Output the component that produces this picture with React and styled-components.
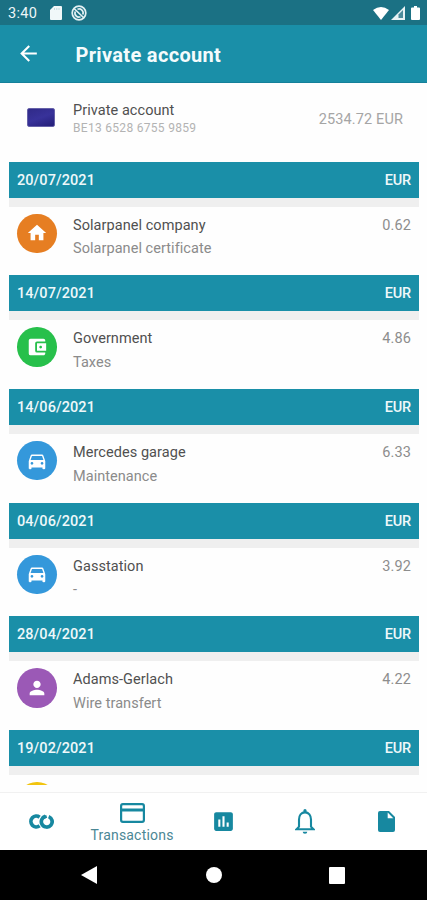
import React from "react";
import styled, { createGlobalStyle } from "styled-components";
import {
  MdHome,
  MdAccountBalanceWallet,
  MdDirectionsCar,
  MdPerson,
  MdInsertChart,
  MdArrowBack,
} from "react-icons/md";

const TEAL = "#1a8fa8";
const ICON_TEAL = "#1788a0";

const GlobalStyle = createGlobalStyle`
  * { box-sizing: border-box; }
  body { margin: 0; background: #fff; font-family: Roboto, "Liberation Sans", sans-serif; }
  svg { display: block; flex: none; }
`;

const Screen = styled.div`
  width: 427px;
  height: 900px;
  display: flex;
  flex-direction: column;
  overflow: hidden;
  background: #fefefe;
`;

const StatusBar = styled.div`
  flex: none;
  height: 25px;
  background: #1b7184;
  color: #eef6f8;
  display: flex;
  align-items: center;
  padding: 1px 7px 0 8px;
`;

const Clock = styled.span`
  width: 42px;
  font-size: 14.5px;
  letter-spacing: 0.3px;
`;

const StatusIcons = styled.div`
  display: flex;
  align-items: center;
  gap: ${(p) => p.$gap};
  margin-left: ${(p) => (p.$end ? "auto" : "0")};
`;

const AppBar = styled.header`
  flex: none;
  height: 58px;
  background: ${TEAL};
  border-bottom: 1px solid #15809a;
  display: flex;
  align-items: center;
  padding: 0 16px;
  color: #fff;
`;

const Title = styled.h1`
  margin: 3px 0 0 34.5px;
  font-size: 20px;
  line-height: 24px;
  font-weight: 700;
  letter-spacing: 0.33px;
  color: #f4fbfc;
`;

const Account = styled.section`
  flex: none;
  height: 78.6px;
  display: flex;
  padding: 18px 24px 0 27px;
`;

const CardThumb = styled.div`
  width: 28px;
  height: 19px;
  margin: 7px 18px 0 0;
  border: 1px solid #6661a8;
  border-radius: 2px;
  background: linear-gradient(160deg, #302a88, #38329a 50%, #241e78);
`;

const AccountText = styled.div`
  flex: 1;
`;

const Name = styled.div`
  font-size: 14.5px;
  line-height: 19px;
  letter-spacing: 0.06px;
  color: #505050;
`;

const Iban = styled.div`
  font-size: 12px;
  line-height: 16px;
  letter-spacing: 0.3px;
  color: #b3b3b3;
`;

const Balance = styled.div`
  font-size: 14.5px;
  line-height: 19px;
  margin-top: 9px;
  letter-spacing: 0.13px;
  color: #a5a5a5;
`;

const List = styled.main`
  flex: none;
  height: 623px;
  overflow: hidden;
  padding: 0 8px 0 9px;
`;

const DateBar = styled.div`
  height: 36px;
  display: flex;
  align-items: center;
  justify-content: space-between;
  padding: 1px 8px 0;
  background: ${TEAL};
  color: #eef8fa;
  font-size: 14.5px;
  font-weight: 500;
  letter-spacing: -0.2px;
`;

const DateText = styled.span`
  letter-spacing: 0.07px;
`;

const Entry = styled.div`
  height: 77.7px;
  display: flex;
  padding: 7px 8px 0;
  border-top: 9px solid #efefef;
`;

const Badge = styled.div`
  width: 39.5px;
  height: 39.5px;
  border-radius: 50%;
  display: flex;
  align-items: center;
  justify-content: center;
  background: ${(p) => p.$color};
  color: #fff;
`;

const EntryText = styled.div`
  flex: 1;
  margin: 2px 0 0 16.5px;
`;

const Detail = styled.div`
  font-size: 14.5px;
  line-height: 19px;
  margin-top: 4.6px;
  letter-spacing: 0.05px;
  color: #8b8b8b;
`;

const Amount = styled.div`
  font-size: 14.5px;
  line-height: 19px;
  margin-top: 2px;
  letter-spacing: 0.1px;
  color: #8d8d8d;
`;

const TabBar = styled.nav`
  flex: none;
  height: 58.5px;
  margin-top: 7.4px;
  border-top: 1px solid #f1f1f1;
  background: #fff;
  color: ${ICON_TEAL};
  display: grid;
  grid-template-columns: 82px 100px 82px 82px 81px;
  align-items: center;
  justify-items: center;
`;

const Tab = styled.div`
  display: flex;
  flex-direction: column;
  align-items: center;
  padding: ${(p) => (p.$active ? "3px 0 0 0" : "0")};
`;

const TabLabel = styled.span`
  font-size: 14px;
  line-height: 16px;
  margin-top: 4px;
  letter-spacing: 0.2px;
  color: #4b8795;
`;

const SystemBar = styled.footer`
  flex: 1;
  background: #000;
  display: flex;
  align-items: center;
  justify-content: space-between;
  padding: 0 82px 0 81px;
`;

const SdCard = () => (
  <svg width="12" height="14" viewBox="0 0 12 14" fill="#f1f8f9">
    <path d="M4 0h7q1 0 1 1v12q0 1-1 1H1q-1 0-1-1V4z" />
    <path d="M4.5 2v2M6.8 2v2M9 2v2" stroke="#c5dbe0" strokeWidth="1" />
  </svg>
);

const SyncIcon = () => (
  <svg width="16" height="16" viewBox="0 0 16 16" fill="none" stroke="#e3f0f3" strokeWidth="1.7">
    <circle cx="8" cy="8" r="6.8" />
    <path d="M3 3.5l10 9.5M6.5 4.300a4 4 0 0 1 5.300 5.200M4.300 6.500a4 4 0 0 0 5.200 5.300" />
  </svg>
);

const Wifi = () => (
  <svg width="16" height="13" viewBox="0 0 16 13" fill="#fff">
    <path d="M0 3Q8-3 16 3L8 13z" />
  </svg>
);

const Signal = () => (
  <svg width="14" height="14" viewBox="0 0 14 14">
    <path d="M0 14L14 0v14z" fill="#e9f3f5" />
    <path d="M7.5 8.5L12 4v8H7.5z" fill="#4d8c9b" />
  </svg>
);

const Battery = () => (
  <svg width="9" height="14" viewBox="0 0 9 14" fill="#fff">
    <path d="M3 0h3v1.5h2q1 0 1 1V13q0 1-1 1H1q-1 0-1-1V2.5q0-1 1-1h2z" />
  </svg>
);

const LoopLogo = () => (
  <svg width="25" height="15" viewBox="0 0 25 15" fill="none" stroke="currentColor" strokeWidth="3.7">
    <path d="M10.6 3.2A5.400 5.400 0 1 0 10.600 11.800" />
    <path d="M16.400 2.400A5.400 5.400 0 1 0 19.700 2.600" />
    <path d="M14.500 3.400L17.700 2.300" strokeWidth="3" />
  </svg>
);

const CardIcon = () => (
  <svg width="25" height="20" viewBox="0 0 25 20" fill="none" stroke="currentColor">
    <rect x="1.1" y="1.1" width="22.8" height="17.8" rx="1.8" strokeWidth="2.2" />
    <path d="M1 7h23" strokeWidth="3" />
  </svg>
);

const BellIcon = () => (
  <svg width="20" height="25" viewBox="0 0 20 25" fill="currentColor">
    <path
      d="M1.6 20.2L4 17.700V10.500C4 6.300 6.300 3.400 10 3.400s6 2.900 6 7.100v7.200l2.400 2.500z"
      fill="none"
      stroke="currentColor"
      strokeWidth="2.1"
    />
    <path d="M8.4 3.200V1.600a1.600 1.600 0 0 1 3.200 0v1.600zM7.700 22.800h4.600a2.300 2 0 0 1-4.600 0z" />
  </svg>
);

const FileIcon = () => (
  <svg width="17" height="21" viewBox="0 0 17 21">
    <path d="M2 0h9l6 6v13q0 2-2 2H2q-2 0-2-2V2q0-2 2-2z" fill="currentColor" />
    <path d="M9.7 1.6V7.200h5.600z" fill="#fff" />
  </svg>
);

const BackTriangle = () => (
  <svg width="16" height="18" viewBox="0 0 16 18" fill="#fff">
    <path d="M16 0v18L0 9z" />
  </svg>
);

const HomeDot = () => (
  <svg width="17" height="16" viewBox="0 0 17 16" fill="#fff">
    <circle cx="9" cy="8" r="8" />
  </svg>
);

const RecentSquare = () => (
  <svg width="16" height="17" viewBox="0 0 16 17" fill="#fff">
    <rect width="16" height="17" rx="1" />
  </svg>
);

const entries = [
  { date: "20/07/2021", name: "Solarpanel company", detail: "Solarpanel certificate", amount: "0.62", color: "#e67e22", Icon: MdHome },
  { date: "14/07/2021", name: "Government", detail: "Taxes", amount: "4.86", color: "#27c04b", Icon: MdAccountBalanceWallet },
  { date: "14/06/2021", name: "Mercedes garage", detail: "Maintenance", amount: "6.33", color: "#3498db", Icon: MdDirectionsCar },
  { date: "04/06/2021", name: "Gasstation", detail: "-", amount: "3.92", color: "#3498db", Icon: MdDirectionsCar },
  { date: "28/04/2021", name: "Adams-Gerlach", detail: "Wire transfert", amount: "4.22", color: "#9b59b6", Icon: MdPerson },
  { date: "19/02/2021", color: "#f1c40f" },
];

export default function App() {
  return (
    <>
      <GlobalStyle />
      <Screen>
        <StatusBar>
          <Clock>3:40</Clock>
          <StatusIcons $gap="9px">
            <SdCard />
            <SyncIcon />
          </StatusIcons>
          <StatusIcons $gap="6px" $end>
            <StatusIcons $gap="2px">
              <Wifi />
              <Signal />
            </StatusIcons>
            <Battery />
          </StatusIcons>
        </StatusBar>
        <AppBar>
          <MdArrowBack size={25} />
          <Title>Private account</Title>
        </AppBar>
        <Account>
          <CardThumb />
          <AccountText>
            <Name>Private account</Name>
            <Iban>BE13 6528 6755 9859</Iban>
          </AccountText>
          <Balance>2534.72 EUR</Balance>
        </Account>
        <List>
          {entries.map(({ date, name, detail, amount, color, Icon }) => (
            <React.Fragment key={date}>
              <DateBar>
                <DateText>{date}</DateText>
                <span>EUR</span>
              </DateBar>
              <Entry>
                <Badge $color={color}>{Icon && <Icon size={22} />}</Badge>
                <EntryText>
                  <Name>{name}</Name>
                  <Detail>{detail}</Detail>
                </EntryText>
                <Amount>{amount}</Amount>
              </Entry>
            </React.Fragment>
          ))}
        </List>
        <TabBar>
          <Tab><LoopLogo /></Tab>
          <Tab $active>
            <CardIcon />
            <TabLabel>Transactions</TabLabel>
          </Tab>
          <Tab><MdInsertChart size={25} /></Tab>
          <Tab><BellIcon /></Tab>
          <Tab><FileIcon /></Tab>
        </TabBar>
        <SystemBar>
          <BackTriangle />
          <HomeDot />
          <RecentSquare />
        </SystemBar>
      </Screen>
    </>
  );
}
